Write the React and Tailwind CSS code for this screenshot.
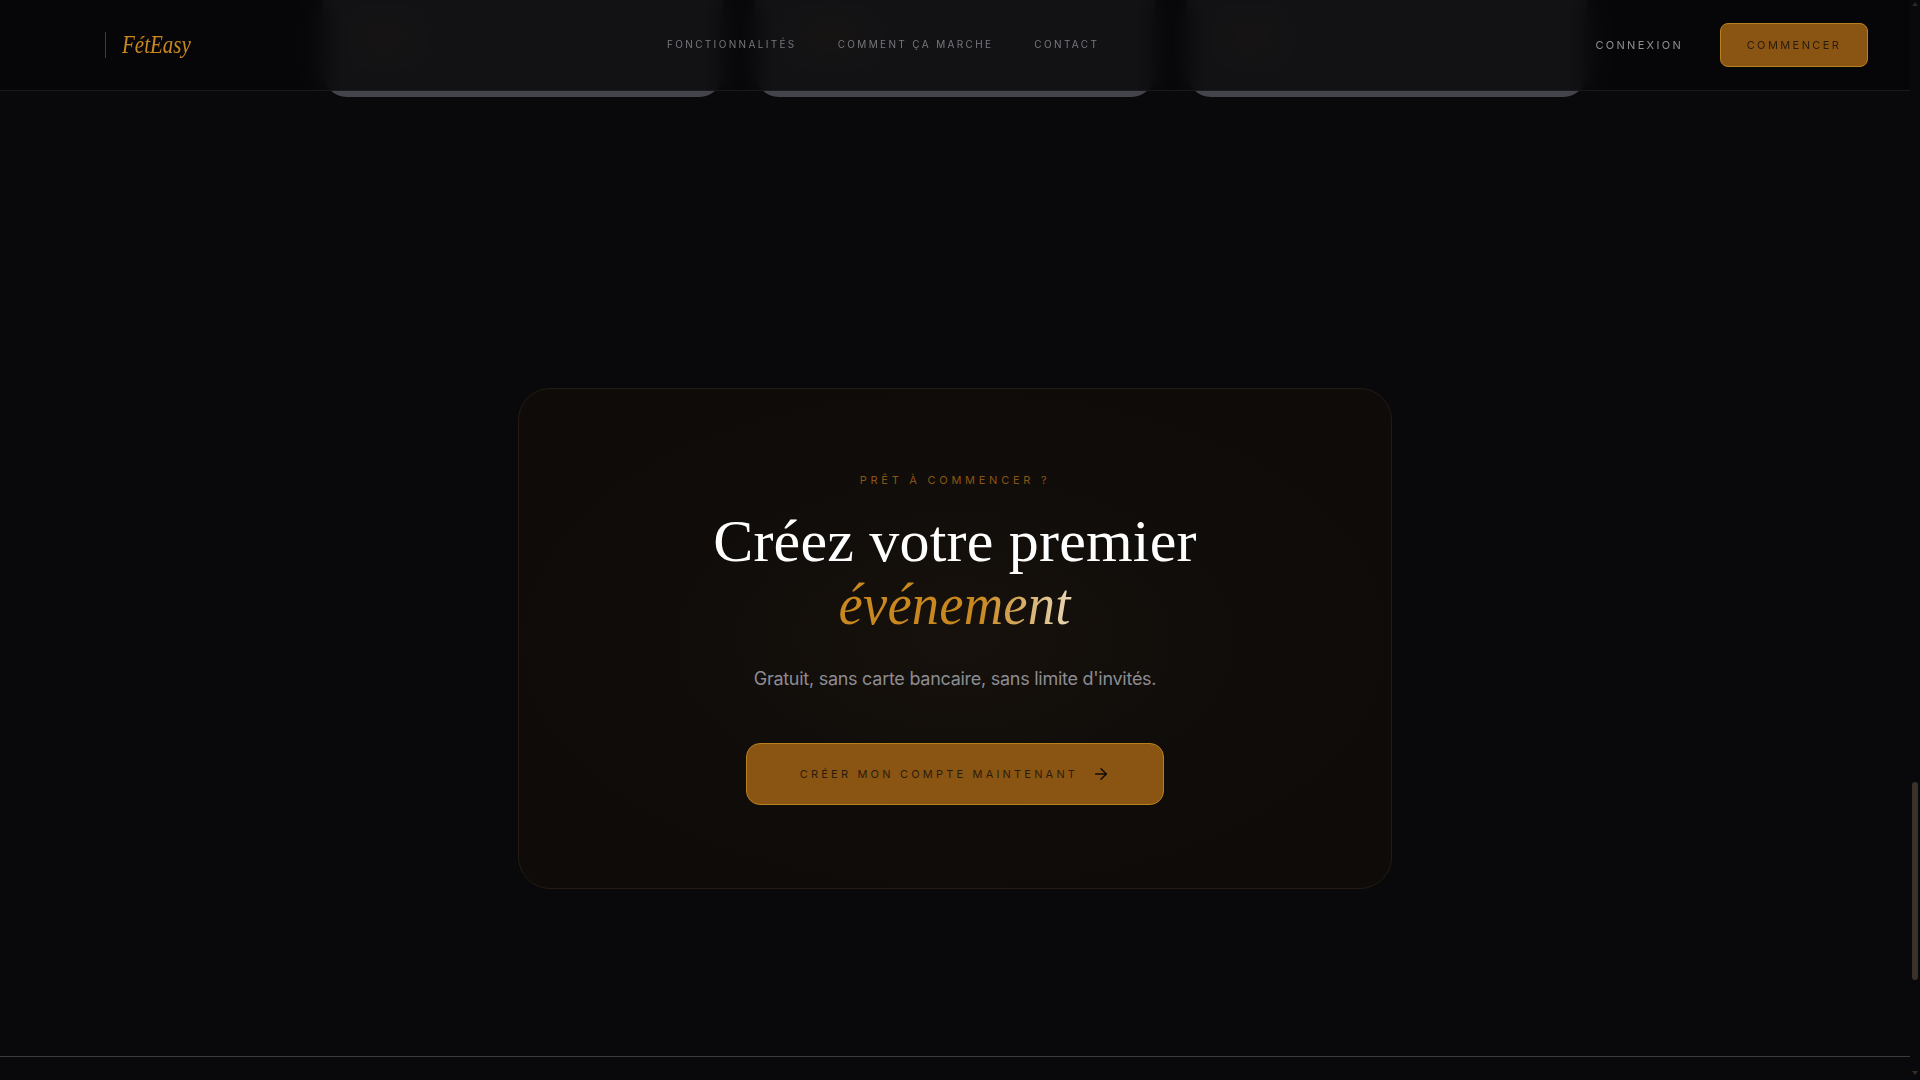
import { ArrowRight } from "lucide-react";

const sans = "font-['Inter','Noto_Sans',sans-serif]";
const serif = "font-['Liberation_Serif',serif]";

function Card({ blob }) {
  return (
    <div className="relative h-[97px] w-[400px] rounded-b-[24px] bg-[#44444c]">
      <div className={`absolute top-[23px] h-[27px] w-[48px] rounded-full bg-[#5c4a3e] blur-[5px] ${blob}`} />
    </div>
  );
}

export default function App() {
  return (
    <div className={`flex h-screen w-full overflow-hidden bg-[#09090c] ${sans}`}>
      <main className="relative flex min-w-0 flex-1 flex-col">
        <header className="absolute inset-x-0 top-0 z-10 flex h-[91px] items-center border-b border-[#1a1a1d] bg-[#060608]/80 pl-[105px] pr-[42px] backdrop-blur-md">
          <div className="flex h-[26px] w-[85px] items-center border-l border-[#4a3c22] pl-[16px]">
            <span className={`${serif} mb-[2px] inline-block origin-left scale-x-[0.84] text-[25px] italic leading-none text-[#c8881f]`}>FétEasy</span>
          </div>
          <nav className="mb-[1px] ml-[477px] flex items-center gap-[41px] text-[10px] uppercase tracking-[0.235em] text-[#77777d]">
            <a>Fonctionnalités</a>
            <a>Comment ça marche</a>
            <a>Contact</a>
          </nav>
          <div className="ml-auto flex items-center gap-[37px]">
            <a className="text-[11px] uppercase tracking-[0.21em] text-[#8f8f95]">Connexion</a>
            <button className="flex h-[44px] w-[148px] items-center justify-center rounded-[8px] border border-[#b8811f] bg-[#8a5513] text-[11px] uppercase tracking-[0.22em] text-[#2a1c0c]">
              Commencer
            </button>
          </div>
        </header>

        <section className="mx-auto flex w-[1264px] gap-[32px]">
          <Card blob="left-[38px]" />
          <Card blob="left-[44px] w-[64px]" />
          <Card blob="left-[40px]" />
        </section>

        <section className="mx-auto mt-[291px] flex h-[501px] w-[874px] flex-col items-center rounded-[32px] border border-[#241c12] bg-[radial-gradient(ellipse_50%_50%_at_50%_50%,#16110c_0%,#110d0a_60%,#0e0b09_100%)] pt-[83px]">
          <p className="text-[11px] uppercase leading-[16px] tracking-[0.34em] text-[#8a5513]">Prêt à commencer ?</p>
          <h1 className={`${serif} mt-[22px] text-center text-[60px] font-normal leading-[63px] tracking-[0.2px] text-white`}>
            Créez votre premier
            <br />
            <em className="inline-block origin-center scale-x-[0.91] bg-[linear-gradient(90deg,#c8881f_0%,#c8881f_60%,#e8d8b8_100%)] bg-clip-text pr-[2px] text-transparent">événement</em>
          </h1>
          <p className="mt-[29px] text-[18px] leading-[28px] tracking-[-0.015em] text-[#8c8c92]">Gratuit, sans carte bancaire, sans limite d'invités.</p>
          <button className="mt-[50px] flex h-[62px] w-[418px] items-center justify-center gap-[14px] rounded-[14px] border border-[#b8811f] bg-[#8a5513] text-[11px] uppercase tracking-[0.29em] text-[#2a1c0c]">
            Créer mon compte maintenant
            <ArrowRight className="h-[18px] w-[18px] text-[#0f0c0a]" strokeWidth={2} />
          </button>
        </section>

        <footer className="mt-[167px] flex-1 border-t border-[#3a3a40]" />
      </main>

      <aside className="relative flex w-[10px] flex-col items-center justify-between bg-[#09090c] py-[2px]">
        <div className="h-0 w-0 border-x-[3px] border-b-[4px] border-x-transparent border-b-[#2e2620]" />
        <div className="absolute left-[2px] top-[782px] h-[198px] w-[6px] rounded-full bg-[#3a312a]" />
        <div className="mb-[3px] h-0 w-0 border-x-[3px] border-t-[4px] border-x-transparent border-t-[#3a2c20]" />
      </aside>
    </div>
  );
}
